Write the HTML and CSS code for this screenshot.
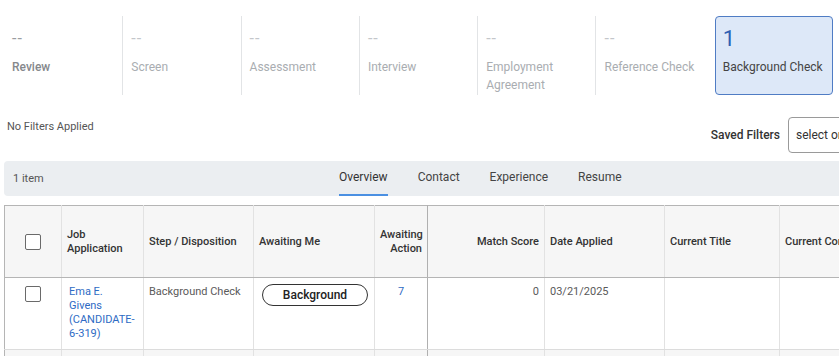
FILE: index.html
```html
<!DOCTYPE html>
<html lang="en">
<head>
    <meta charset="UTF-8">
    <meta name="viewport" content="width=device-width, initial-scale=1.0">
    <title>Candidates</title>
    <link rel="stylesheet" href="styles.css">
</head>
<body>
    <div class="stages">
        <div class="stage first">
            <div class="stage-count">--</div>
            <div class="stage-name">Review</div>
        </div>
        <div class="stage">
            <div class="stage-count">--</div>
            <div class="stage-name">Screen</div>
        </div>
        <div class="stage">
            <div class="stage-count">--</div>
            <div class="stage-name">Assessment</div>
        </div>
        <div class="stage">
            <div class="stage-count">--</div>
            <div class="stage-name">Interview</div>
        </div>
        <div class="stage">
            <div class="stage-count">--</div>
            <div class="stage-name">Employment Agreement</div>
        </div>
        <div class="stage">
            <div class="stage-count">--</div>
            <div class="stage-name">Reference Check</div>
        </div>
        <div class="stage active">
            <div class="stage-count">1</div>
            <div class="stage-name">Background Check</div>
        </div>
    </div>

    <div class="filter-row">
        <div class="no-filters">No Filters Applied</div>
        <div class="saved-filters">
            <label for="savedFilter">Saved Filters</label>
            <div class="select-box" id="savedFilter">select one</div>
        </div>
    </div>

    <div class="toolbar">
        <div class="item-count">1 item</div>
        <div class="tabs">
            <span class="tab selected">Overview</span>
            <span class="tab">Contact</span>
            <span class="tab">Experience</span>
            <span class="tab">Resume</span>
        </div>
    </div>

    <table class="grid">
        <colgroup>
            <col class="c-check">
            <col class="c-job">
            <col class="c-step">
            <col class="c-me">
            <col class="c-action">
            <col class="c-score">
            <col class="c-date">
            <col class="c-title">
            <col class="c-company">
        </colgroup>
        <thead>
            <tr>
                <th class="check-cell"><span class="checkbox"></span></th>
                <th>Job Application</th>
                <th>Step / Disposition</th>
                <th>Awaiting Me</th>
                <th class="num frozen">Awaiting Action</th>
                <th class="num">Match Score</th>
                <th>Date Applied</th>
                <th>Current Title</th>
                <th>Current Company</th>
            </tr>
        </thead>
        <tbody>
            <tr>
                <td class="check-cell"><span class="checkbox"></span></td>
                <td><a class="link name" href="#">Ema E.<br>Givens<br>(CANDIDATE-<br>6-319)</a></td>
                <td>Background Check</td>
                <td><span class="pill">Background</span></td>
                <td class="center frozen"><a class="link" href="#">7</a></td>
                <td class="num">0</td>
                <td>03/21/2025</td>
                <td></td>
                <td></td>
            </tr>
            <tr class="empty-row">
                <td></td><td></td><td></td><td></td><td class="frozen"></td><td></td><td></td><td></td><td></td>
            </tr>
        </tbody>
    </table>
</body>
</html>
```

FILE: styles.css
```css
body {
    margin: 0;
    font-family: Roboto, "Liberation Sans", Arial, sans-serif;
    color: #555;
    overflow: hidden;
    width: 839px;
}
.stages {
    display: flex;
    margin: 16px 0 0 4px;
}
.stage {
    width: 118.3px;
    height: 79px;
    box-sizing: border-box;
    padding: 10px 8px 0 8px;
    border-left: 1px solid #e2e4e6;
    flex-shrink: 0;
}
.stage.first {
    border-left: none;
}
.stage-count {
    font-size: 16px;
    line-height: 26px;
    height: 26px;
    color: #c3c6ca;
    letter-spacing: 1px;
}
.stage-name {
    margin-top: 6px;
    font-size: 12px;
    line-height: 18px;
    color: #a9adb1;
}
.stage.first .stage-count {
    color: #9a9da1;
}
.stage.first .stage-name {
    color: #85888c;
    font-weight: 500;
}
.stage.active {
    background: #dde8f8;
    border: 1px solid #4f7cc4;
    border-radius: 4px;
    padding: 9px 7px 0 7px;
    margin-left: 1px;
}
.stage.active .stage-count {
    font-size: 22px;
    color: #2d5fb3;
    letter-spacing: 0;
}
.stage.active .stage-name {
    color: #444;
}
.filter-row {
    display: flex;
    justify-content: space-between;
    align-items: flex-start;
    margin-top: 22px;
    height: 36px;
}
.no-filters {
    font-size: 11px;
    line-height: 14px;
    padding: 3px 0 0 7px;
    color: #555;
}
.saved-filters {
    display: flex;
    align-items: center;
    gap: 8px;
    margin-right: -40px;
}
.saved-filters label {
    font-size: 12px;
    font-weight: 500;
    color: #333;
}
.select-box {
    width: 91px;
    height: 36px;
    box-sizing: border-box;
    border: 1px solid #9a9a9a;
    border-radius: 4px;
    padding: 0 7px;
    font-size: 12px;
    line-height: 34px;
    color: #333;
    white-space: nowrap;
}
.toolbar {
    display: flex;
    align-items: stretch;
    height: 35px;
    margin: 8px 0 0 4px;
    background: #ebeef1;
    border-radius: 4px 0 0 4px;
}
.item-count {
    width: 326px;
    padding-left: 9px;
    font-size: 11px;
    line-height: 35px;
    color: #555;
}
.tabs {
    display: flex;
    gap: 30px;
}
.tab {
    font-size: 12px;
    line-height: 33px;
    color: #444;
    border-bottom: 2px solid transparent;
}
.tab.selected {
    color: #333;
    border-bottom-color: #4a90e2;
}
.grid {
    margin: 9px 0 0 4px;
    border-collapse: collapse;
    table-layout: fixed;
    width: 955px;
    border-top: 1px solid #b5b5b5;
    border-left: 1px solid #b5b5b5;
}
.c-check { width: 57px; }
.c-job { width: 82px; }
.c-step { width: 110px; }
.c-me { width: 121px; }
.c-action { width: 53px; }
.c-score { width: 117px; }
.c-date { width: 120px; }
.c-title { width: 115px; }
.c-company { width: 180px; }
.grid th {
    height: 71px;
    background: #f6f6f6;
    font-size: 11px;
    font-weight: 500;
    line-height: 14px;
    color: #333;
    text-align: left;
    padding: 0 5px;
    border-right: 1px solid #e2e2e2;
    border-bottom: 1px solid #b5b5b5;
}
.grid td {
    height: 63px;
    vertical-align: top;
    font-size: 11px;
    line-height: 14px;
    color: #5a5a5a;
    padding: 7px 5px 0 5px;
    border-right: 1px solid #e2e2e2;
    border-bottom: 1px solid #dcdcdc;
}
.grid .num {
    text-align: right;
}
.grid .center {
    text-align: center;
}
.grid .frozen {
    border-right: 1px solid #b0b0b0;
}
.grid .check-cell {
    text-align: center;
    padding: 0;
}
.grid td.check-cell {
    padding-top: 8px;
}
.checkbox {
    display: inline-block;
    width: 14px;
    height: 14px;
    border: 1px solid #6a6a6a;
    border-radius: 2px;
    background: #fff;
    vertical-align: middle;
}
.link {
    color: #2e6bc4;
    text-decoration: none;
}
.name {
    display: block;
    padding-left: 2px;
}
.pill {
    display: block;
    width: 106px;
    height: 22px;
    box-sizing: border-box;
    margin: -1px 0 0 3px;
    border: 1px solid #333;
    border-radius: 11px;
    text-align: center;
    font-size: 12px;
    font-weight: 500;
    line-height: 20px;
    color: #222;
}
.empty-row td {
    height: 20px;
    background: #f6f6f6;
    padding: 0;
}
```
